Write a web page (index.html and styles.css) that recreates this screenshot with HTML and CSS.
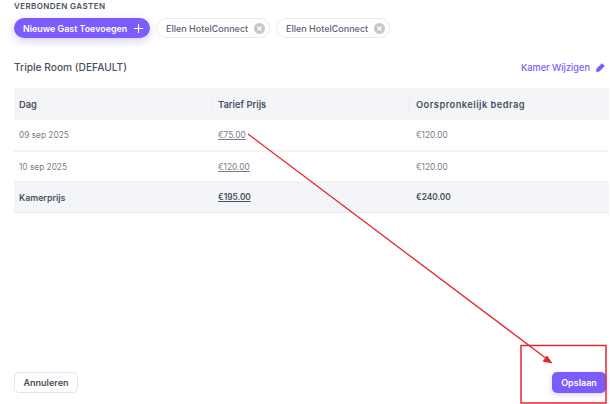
FILE: index.html
```html
<!DOCTYPE html>
<html lang="en">
<head>
  <meta charset="UTF-8">
  <title>Verbonden gasten</title>
  <link rel="stylesheet" href="styles.css">
</head>
<body>

  <div class="page">
    <h4 class="label">VERBONDEN GASTEN</h4>

    <div class="chips">
      <button class="add-guest">Nieuwe Gast Toevoegen
        <svg width="9" height="9" viewBox="0 0 10 10"><path d="M5 0v10M0 5h10" stroke="#fff" stroke-width="1.2"/></svg>
      </button>
      <span class="chip">Ellen HotelConnect
        <svg width="11" height="11" viewBox="0 0 12 12"><circle cx="6" cy="6" r="6" fill="#c4c6cb"/><path d="M3.8 3.8l4.4 4.4M8.2 3.8l-4.4 4.4" stroke="#fff" stroke-width="1.3"/></svg>
      </span>
      <span class="chip">Ellen HotelConnect
        <svg width="11" height="11" viewBox="0 0 12 12"><circle cx="6" cy="6" r="6" fill="#c4c6cb"/><path d="M3.8 3.8l4.4 4.4M8.2 3.8l-4.4 4.4" stroke="#fff" stroke-width="1.3"/></svg>
      </span>
    </div>

    <div class="room-head">
      <span class="room-name">Triple Room (DEFAULT)</span>
      <a class="room-edit">Kamer Wijzigen
        <svg width="9" height="9" viewBox="0 0 9 9"><path d="M6 .2l2.800 2.800-5.400 5.400L0 9l.6-3.400z" fill="#7c5cfc"/></svg>
      </a>
    </div>

    <table class="prices">
      <thead>
        <tr><th>Dag</th><th>Tarief Prijs</th><th class="original">Oorspronkelijk bedrag</th></tr>
      </thead>
      <tbody>
        <tr><td>09 sep 2025</td><td><u>€75.00</u></td><td>€120.00</td></tr>
        <tr><td>10 sep 2025</td><td><u>€120.00</u></td><td>€120.00</td></tr>
        <tr class="total"><td class="total-label">Kamerprijs</td><td><u>€195.00</u></td><td>€240.00</td></tr>
      </tbody>
    </table>

    <div class="footer">
      <button class="cancel">Annuleren</button>
      <button class="save">Opslaan</button>
    </div>
  </div>

  <!-- red annotation drawn on top of the screenshot -->
  <svg class="annotation" width="610" height="404" viewBox="0 0 610 404">
    <path d="M248 134L547 359" stroke="#e5262b" stroke-width="1.300" fill="none"/>
    <path d="M552.500 363.500l-10-2 4.500-6z" fill="#e5262b"/>
    <rect x="521" y="345.500" width="85" height="57.500" stroke="#e5262b" stroke-width="1.500" fill="none"/>
  </svg>

</body>
</html>
```

FILE: styles.css
```css
body {
  margin: 0;
  font-family: 'Inter', 'Open Sans', sans-serif;
  color: #4a5162;
  background: #fff;
}

.page {
  box-sizing: border-box;
  height: 404px;
  width: 610px;
  padding: 1px 1px 11px 14px;
  display: flex;
  flex-direction: column;
  overflow: hidden;
}

.label {
  margin: 0;
  font-size: 8px;
  line-height: 10px;
  font-weight: 600;
  letter-spacing: 0.4px;
}

.chips {
  display: flex;
  gap: 6px;
  margin-top: 7px;
  height: 20px;
}

.add-guest {
  display: flex;
  align-items: center;
  gap: 7px;
  width: 136px;
  padding: 0 0 0 9px;
  border: none;
  border-radius: 10px;
  background: #7c5cfc;
  color: #fff;
  font: 600 8.900px 'Inter', sans-serif;
  box-shadow: 0 3px 8px rgba(124, 92, 252, 0.3);
}

.chip {
  display: flex;
  align-items: center;
  justify-content: space-between;
  box-sizing: border-box;
  width: 114px;
  padding: 0 4px 0 9px;
  border: 1px solid #e8eaee;
  border-radius: 10px;
  font-size: 9px;
  font-weight: 500;
  color: #5d6372;
}

.room-head {
  display: flex;
  justify-content: space-between;
  align-items: center;
  margin-top: 22px;
  padding-right: 4px;
  height: 14px;
}

.room-name {
  font-size: 10.200px;
  font-weight: 500;
}

.room-edit {
  display: flex;
  align-items: center;
  gap: 6px;
  font-size: 9.200px;
  font-weight: 500;
  color: #7c5cfc;
}

.prices {
  margin-top: 14px;
  width: 595px;
  border-collapse: collapse;
  table-layout: fixed;
  font-size: 8.300px;
}

.prices th:nth-child(1) { width: 198px; }
.prices th:nth-child(2) { width: 197px; }

.prices th {
  box-sizing: border-box;
  height: 32px;
  padding: 0 5px;
  text-align: left;
  font-size: 9.300px;
  font-weight: 600;
  background: #f3f5f8;
}

.prices th + th {
  background-image: linear-gradient(#e8eaee, #e8eaee);
  background-size: 1px 14px;
  background-position: left center;
  background-repeat: no-repeat;
  padding-left: 6px;
}

.prices .original {
  padding-left: 7px;
  letter-spacing: 0.45px;
}

.prices td {
  box-sizing: border-box;
  height: 31px;
  padding: 0 5px;
  color: #787d89;
  border-bottom: 2px solid #f1f3f6;
}

.prices td + td {
  padding-left: 6px;
}

.prices td:nth-child(3) {
  padding-left: 7px;
}

.prices .total td {
  height: 30px;
  font-weight: 600;
  color: #4a5162;
  background: #f3f5f8;
  border-bottom: 1px solid #e8eaee;
}

.prices .total .total-label {
  font-size: 8.800px;
}

.footer {
  display: flex;
  justify-content: space-between;
  align-items: center;
  margin-top: auto;
  padding-right: 3px;
}

.cancel,
.save {
  height: 21px;
  border-radius: 5px;
  font: 600 9px 'Inter', sans-serif;
}

.cancel {
  width: 64px;
  border: 1px solid #e3e5ea;
  background: #fff;
  color: #4a5162;
}

.save {
  width: 54px;
  border: none;
  background: #7c5cfc;
  color: #fff;
  box-shadow: 0 2px 6px rgba(124, 92, 252, 0.25);
}

.annotation {
  position: absolute;
  left: 0;
  top: 0;
  pointer-events: none;
}
```
